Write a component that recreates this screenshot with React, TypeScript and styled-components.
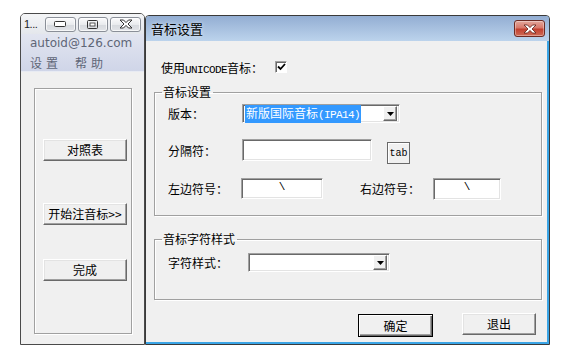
import React from "react";
import styled, { createGlobalStyle } from "styled-components";

const Global = createGlobalStyle`
  html, body { margin: 0; padding: 0; background: #ffffff; }
  body { width: 569px; height: 350px; overflow: hidden; font-family: "Noto Sans CJK SC", "Liberation Sans", sans-serif; font-size: 12px; color: #000; }
  * { box-sizing: border-box; }
`;

const Page = styled.div`
  display: flex;
  align-items: flex-start;
  padding-left: 20px;
  width: 569px;
  height: 350px;
`;

/* ---------- left small window ---------- */
const SideWin = styled.div`
  margin-top: 13px;
  width: 125px;
  height: 332px;
  border: 1px solid #4a4a4a;
  border-radius: 5px 5px 0 0;
  background: #f0f0f0;
  display: flex;
  flex-direction: column;
  overflow: hidden;
`;

const SideTitle = styled.div`
  height: 20px;
  display: flex;
  align-items: center;
  padding: 0 3px 0 3px;
  background: linear-gradient(#f4f5f7, #e4e7ec);
  gap: 2px;
`;

const SideTitleText = styled.span`
  font-family: "Liberation Sans", sans-serif;
  font-size: 11px;
  color: #222;
  width: 19px;
  letter-spacing: -0.5px;
`;

const CapBtn = styled.div`
  width: 31px;
  height: 15px;
  border: 1px solid #8a8f98;
  border-radius: 3px;
  background: linear-gradient(#fbfbfc 0%, #e9ebee 50%, #d6d9de 51%, #e2e4e8 100%);
  box-shadow: inset 0 0 0 1px rgba(255,255,255,0.7);
  display: flex;
  align-items: center;
  justify-content: center;
`;

const SideBand = styled.div`
  background: linear-gradient(#e2e5f0, #cfd5e8);
  border-bottom: 1px solid #e8ebf3;
  padding: 0 0 0 9px;
`;

const Email = styled.div`
  height: 19px;
  line-height: 19px;
  font-family: "DejaVu Sans", "Liberation Sans", sans-serif;
  font-size: 12px;
  color: #5f6677;
`;

const Menu = styled.div`
  height: 18px;
  display: flex;
  gap: 13px;
  align-items: center;
  font-size: 12px;
  color: #5f6677;
  letter-spacing: 4px;
`;

const SideGroup = styled.div`
  margin: 16px 0 0 13px;
  width: 98px;
  height: 246px;
  border: 1px solid #a0a0a0;
  box-shadow: inset 1px 1px 0 #fff, 1px 1px 0 #fff;
  display: flex;
  flex-direction: column;
  align-items: flex-start;
  padding: 50px 0 0 8px;
`;

const Button = styled.button<{ $w: number; $h?: number; $def?: boolean; $mt?: number }>`
  width: ${(p) => p.$w}px;
  height: ${(p) => p.$h ?? 22}px;
  margin-top: ${(p) => p.$mt ?? 0}px;
  padding: 0;
  background: #f0f0f0;
  font-family: "Noto Sans CJK SC", sans-serif;
  font-size: 12px;
  color: #000;
  border: 1px solid;
  border-color: ${(p) => (p.$def ? "#000" : "#fff #696969 #696969 #fff")};
  box-shadow: ${(p) =>
    p.$def
      ? "inset 1px 1px 0 #fff, inset -1px -1px 0 #696969, inset -2px -2px 0 #a0a0a0"
      : "inset -1px -1px 0 #a0a0a0, inset 1px 1px 0 #e3e3e3"};
  display: flex;
  align-items: center;
  justify-content: center;
  line-height: 1;
`;

/* ---------- dialog ---------- */
const Dialog = styled.div`
  margin-top: 15px;
  width: 405px;
  height: 330px;
  border: 1px solid #3a3a3a;
  border-radius: 4px 4px 0 0;
  background: #f0f0f0;
  display: flex;
  flex-direction: column;
  box-shadow: inset -2px -2px 0 #3ba5e6;
  overflow: hidden;
`;

const DlgTitle = styled.div`
  height: 25px;
  flex: none;
  display: flex;
  align-items: center;
  justify-content: space-between;
  padding: 0 4px 0 5px;
  background: linear-gradient(#93aed3, #bcd3ec);
`;

const DlgTitleText = styled.span`
  font-size: 13px;
  color: #000;
  text-shadow: 0 0 4px rgba(255,255,255,0.8);
`;

const CloseRed = styled.div`
  width: 31px;
  height: 17px;
  border: 1px solid #6d2a22;
  border-radius: 3px;
  background: linear-gradient(#e3a89c 0%, #d8786a 45%, #c2402f 55%, #cf6b56 100%);
  box-shadow: inset 0 0 0 1px rgba(255,255,255,0.35);
  display: flex;
  align-items: center;
  justify-content: center;
`;

const DlgBody = styled.div`
  flex: 1;
  padding: 0 5px 0 8px;
  display: flex;
  flex-direction: column;
`;

const CheckRow = styled.div`
  margin-top: 17px;
  height: 18px;
  padding-left: 7px;
  display: flex;
  align-items: center;
`;

const Mono = styled.span`
  font-family: "Liberation Mono", monospace;
  font-size: 11px;
  letter-spacing: -0.6px;
`;

const Check = styled.div`
  margin-left: 12px;
  width: 12px;
  height: 12px;
  background: #fff;
  border: 1px solid;
  border-color: #a0a0a0 #fff #fff #a0a0a0;
  box-shadow: inset 1px 1px 0 #696969;
  display: flex;
  align-items: center;
  justify-content: center;
`;

const Group = styled.fieldset<{ $h: number; $mt: number }>`
  margin: ${(p) => p.$mt}px 0 0 0;
  height: ${(p) => p.$h}px;
  width: 388px;
  padding: 0 0 0 13px;
  border: 1px solid #a0a0a0;
  box-shadow: inset 1px 1px 0 #fff, 1px 1px 0 #fff;
  min-width: 0;
`;

const Legend = styled.legend`
  margin-left: -6px;
  padding: 0 2px 0 1px;
  font-size: 12px;
  line-height: 16px;
`;

const Row = styled.div<{ $mt: number }>`
  display: flex;
  align-items: flex-start;
  margin-top: ${(p) => p.$mt}px;
`;

const Label = styled.span<{ $w: number; $lh?: number }>`
  width: ${(p) => p.$w}px;
  flex: none;
  font-size: 12px;
  line-height: ${(p) => p.$lh ?? 19}px;
`;

const Field = styled.div<{ $w: number; $h: number }>`
  width: ${(p) => p.$w}px;
  height: ${(p) => p.$h}px;
  flex: none;
  background: #fff;
  border: 1px solid;
  border-color: #a0a0a0 #fff #fff #a0a0a0;
  box-shadow: inset 1px 1px 0 #696969, inset -1px -1px 0 #e3e3e3;
  display: flex;
  align-items: flex-start;
  justify-content: center;
  font-family: "Liberation Mono", monospace;
  font-size: 11px;
  line-height: 14px;
  padding-top: 1px;
`;

const Select = styled.div<{ $w: number; $h: number }>`
  width: ${(p) => p.$w}px;
  height: ${(p) => p.$h}px;
  flex: none;
  background: #fff;
  border: 1px solid;
  border-color: #a0a0a0 #fff #fff #a0a0a0;
  box-shadow: inset 1px 1px 0 #696969, inset -1px -1px 0 #e3e3e3;
  display: flex;
  align-items: center;
  padding: 2px 2px 2px 2px;
`;

const SelValue = styled.span`
  flex: 1;
  display: flex;
`;

const Highlight = styled.span`
  background: #3399ff;
  color: #fff;
  font-size: 12px;
  line-height: 15px;
  padding: 0 1px;
`;

const HlMono = styled.span`
  font-family: "Liberation Mono", monospace;
  font-size: 11px;
  letter-spacing: -0.6px;
`;

const DropBtn = styled.div`
  width: 14px;
  height: 15px;
  flex: none;
  background: #f0f0f0;
  border: 1px solid;
  border-color: #fff #696969 #696969 #fff;
  box-shadow: inset -1px -1px 0 #a0a0a0;
  display: flex;
  align-items: center;
  justify-content: center;
`;

const TabBtn = styled.div`
  margin-left: 15px;
  margin-top: 3px;
  width: 23px;
  height: 22px;
  flex: none;
  border: 1px solid #696969;
  background: #f0f0f0;
  box-shadow: inset 1px 1px 0 #fff;
  display: flex;
  align-items: center;
  justify-content: center;
  font-family: "Liberation Mono", monospace;
  font-size: 10px;
`;

const Footer = styled.div`
  margin-top: 13px;
  display: flex;
  gap: 29px;
  padding-left: 204px;
  align-items: flex-start;
`;

const Arrow = () => (
  <svg width="7" height="4" viewBox="0 0 7 4">
    <path d="M0 0h7L3.5 4z" fill="#000" />
  </svg>
);

export default function App() {
  return (
    <>
      <Global />
      <Page>
        <SideWin>
          <SideTitle>
            <SideTitleText>1...</SideTitleText>
            <CapBtn>
              <svg width="12" height="6" viewBox="0 0 12 6">
                <rect x="0.5" y="0.5" width="11" height="5" rx="1" fill="#fff" stroke="#333" />
              </svg>
            </CapBtn>
            <CapBtn>
              <svg width="11" height="9" viewBox="0 0 11 9">
                <rect x="0.5" y="0.5" width="10" height="8" rx="1" fill="none" stroke="#333" />
                <rect x="3" y="3" width="5" height="3" fill="#fff" stroke="#333" strokeWidth="0.8" />
              </svg>
            </CapBtn>
            <CapBtn>
              <svg width="14" height="10" viewBox="0 0 14 10">
                <path d="M1 1h3.5L7 3.6 9.5 1H13L9 5l4 4H9.5L7 6.4 4.5 9H1l4-4z" fill="#fff" stroke="#333" strokeWidth="1" strokeLinejoin="round" />
              </svg>
            </CapBtn>
          </SideTitle>
          <SideBand>
            <Email>autoid@126.com</Email>
            <Menu>
              <span>设置</span>
              <span>帮助</span>
            </Menu>
          </SideBand>
          <SideGroup>
            <Button $w={84}>对照表</Button>
            <Button $w={84} $mt={42}>开始注音标&gt;&gt;</Button>
            <Button $w={84} $mt={34}>完成</Button>
          </SideGroup>
        </SideWin>

        <Dialog>
          <DlgTitle>
            <DlgTitleText>音标设置</DlgTitleText>
            <CloseRed>
              <svg width="14" height="10" viewBox="0 0 14 10">
                <path d="M1 1h3.5L7 3.6 9.5 1H13L9 5l4 4H9.5L7 6.4 4.5 9H1l4-4z" fill="#fff" stroke="#5a2018" strokeWidth="0.8" strokeLinejoin="round" />
              </svg>
            </CloseRed>
          </DlgTitle>
          <DlgBody>
            <CheckRow>
              <span>
                使用<Mono>UNICODE</Mono>音标：
              </span>
              <Check>
                <svg width="9" height="8" viewBox="0 0 9 8">
                  <path d="M1 3.5l2.5 2.5L8 1" fill="none" stroke="#000" strokeWidth="1.8" />
                </svg>
              </Check>
            </CheckRow>

            <Group $h={132} $mt={8}>
              <Legend>音标设置</Legend>
              <Row $mt={4}>
                <Label $w={74}>版本：</Label>
                <Select $w={158} $h={19}>
                  <SelValue>
                    <Highlight>
                      新版国际音标<HlMono>(IPA14)</HlMono>
                    </Highlight>
                  </SelValue>
                  <DropBtn>
                    <Arrow />
                  </DropBtn>
                </Select>
              </Row>
              <Row $mt={16}>
                <Label $w={74} $lh={24}>分隔符：</Label>
                <Field $w={130} $h={22} />
                <TabBtn>tab</TabBtn>
              </Row>
              <Row $mt={14}>
                <Label $w={73} $lh={21}>左边符号：</Label>
                <Field $w={82} $h={21}>\</Field>
                <Label $w={37} />
                <Label $w={73} $lh={22}>右边符号：</Label>
                <Field $w={68} $h={22}>\</Field>
              </Row>
            </Group>

            <Group $h={69} $mt={15}>
              <Legend>音标字符样式</Legend>
              <Row $mt={6}>
                <Label $w={80}>字符样式：</Label>
                <Select $w={142} $h={19}>
                  <SelValue />
                  <DropBtn>
                    <Arrow />
                  </DropBtn>
                </Select>
              </Row>
            </Group>

            <Footer>
              <Button $w={75} $h={23} $def $mt={1}>确定</Button>
              <Button $w={74}>退出</Button>
            </Footer>
          </DlgBody>
        </Dialog>
      </Page>
    </>
  );
}
